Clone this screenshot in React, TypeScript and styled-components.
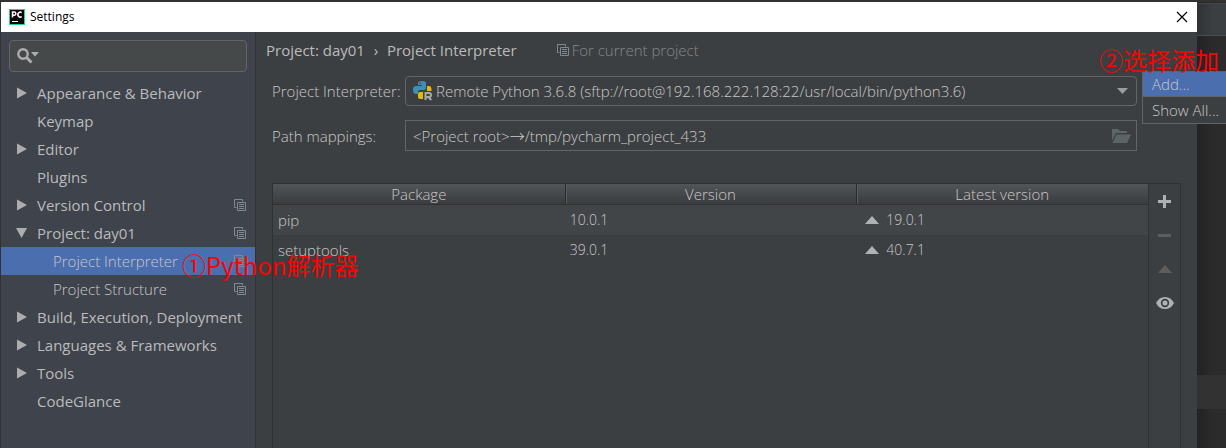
import React from "react";
import styled, { createGlobalStyle, css } from "styled-components";

const Global = createGlobalStyle`
  * { box-sizing: border-box; }
  html, body { margin: 0; background: #2b2b2b; overflow: hidden; }
  body, button, input, select, table {
    font-family: "Open Sans", "Noto Sans", "Noto Sans CJK SC", sans-serif;
    font-size: 15px;
    line-height: 20px;
    color: #bbbbbb;
  }
`;

const lightText = css`
  font-weight: 300;
  color: #c8c8c8;
`;

const Desktop = styled.div`
  position: relative;
  display: flex;
  min-height: 100vh;
  padding: 2px 0 0 1px;
  background: #323232;
`;

const Dialog = styled.section`
  flex: 1;
  min-width: 0;
  display: flex;
  flex-direction: column;
  background: #3c3f41;
`;

const Editor = styled.aside`
  width: 29px;
  display: flex;
  flex-direction: column;
  background: linear-gradient(90deg, #222222, #2b2b2b 16px);
`;

const EditorToolbar = styled.div`
  height: 33px;
  margin-top: 1px;
  background: linear-gradient(90deg, #2f3133, #3c3f41 16px);
  border-top: 1px solid #45484a;
  border-bottom: 1px solid #4b4d4f;
`;

const CaretLine = styled.div`
  height: 34px;
  margin: auto 0 39px;
  background: #323232;
`;

const TitleBar = styled.header`
  display: flex;
  align-items: center;
  gap: 5px;
  height: 30px;
  padding: 0 5px 0 8px;
  background: #ffffff;
  color: #000000;
`;

const Title = styled.h1`
  flex: 1;
  margin: 0;
  font-size: 12px;
  font-weight: 400;
`;

const IconButton = styled.button`
  display: flex;
  align-items: center;
  justify-content: center;
  width: 20px;
  height: 20px;
  padding: 0;
  border: 0;
  background: none;
  color: inherit;
  &:disabled { color: #5e5e5e; }
`;

const Body = styled.div`
  flex: 1;
  display: flex;
`;

const Sidebar = styled.nav`
  width: 255px;
  border-right: 1px solid #323232;
  background: #3e434c;
`;

const SearchBox = styled.label`
  display: flex;
  align-items: center;
  height: 32px;
  margin: 8px 8px 7px;
  padding: 0 7px;
  border: 1px solid #646464;
  border-radius: 4px;
  background: #45494a;
`;

const SearchInput = styled.input`
  flex: 1;
  min-width: 0;
  border: 0;
  outline: 0;
  background: none;
`;

const Tree = styled.ul`
  margin: 0;
  padding: 0;
  list-style: none;
`;

const TreeLink = styled.a<{ $selected?: boolean; $child?: boolean }>`
  display: flex;
  align-items: center;
  height: 28px;
  padding: 0 9px 0 14px;
  color: #bbbbbb;
  text-decoration: none;
  background: ${(p) => (p.$selected ? "#4b6eaf" : "transparent")};
  ${(p) => p.$child && css`padding-left: 30px; ${lightText}`}
`;

const ArrowSlot = styled.span`
  display: flex;
  width: 22px;
`;

const TreeLabel = styled.span`
  flex: 1;
  white-space: nowrap;
`;

const Content = styled.main`
  flex: 1;
  min-width: 0;
  display: flex;
  flex-direction: column;
  padding: 8px 16px 0 10px;
`;

const Crumbs = styled.div`
  display: flex;
  align-items: center;
  height: 20px;
  white-space: nowrap;
`;

const Separator = styled.span`
  width: 22px;
  text-align: center;
`;

const Scope = styled.span`
  display: flex;
  align-items: center;
  gap: 3px;
  margin-left: 40px;
  color: #85888a;
  font-weight: 300;
`;

const Form = styled.form`
  display: grid;
  grid-template-columns: 133px 1fr;
  align-items: center;
  row-gap: 14px;
  padding: 16px 44px 0 6px;
  white-space: nowrap;
  ${lightText}
`;

const Field = styled.div<{ $round?: boolean }>`
  display: flex;
  align-items: center;
  gap: 3px;
  height: ${(p) => (p.$round ? "30px" : "31px")};
  padding: ${(p) => (p.$round ? "0 8px 0 7px" : "0 5px 0 7px")};
  border: 1px solid #646464;
  border-radius: ${(p) => (p.$round ? "4px" : "0")};
`;

const Select = styled.select`
  flex: 1;
  min-width: 0;
  padding: 0;
  border: 0;
  appearance: none;
  background: none;
  ${lightText}
`;

const PathInput = styled.input`
  flex: 1;
  min-width: 0;
  padding: 0;
  border: 0;
  background: none;
  ${lightText}
`;

const PackagePanel = styled.div`
  flex: 1;
  display: flex;
  margin: 32px 0 0 6px;
  border: 1px solid #2f3133;
  border-bottom: 0;
`;

const PackageArea = styled.div`
  flex: 1;
  border-right: 1px solid #323232;
`;

const Table = styled.table`
  width: 100%;
  table-layout: fixed;
  border-collapse: separate;
  border-spacing: 0;
  ${lightText}
`;

const HeadCell = styled.th`
  height: 21px;
  padding: 0;
  border-bottom: 1px solid #2f3133;
  background: linear-gradient(#515558, #3a3c3e);
  font-weight: 300;
  & + & { box-shadow: inset 1px 0 #2b2b2b, inset 2px 0 #5a5d5f; }
`;

const Row = styled.tr`
  &:nth-child(odd) { background: #414547; }
`;

const Cell = styled.td<{ $numeric?: boolean }>`
  height: 30px;
  padding: 0 5px;
  font-size: ${(p) => (p.$numeric ? "14px" : "15px")};
`;

const Latest = styled.span`
  display: flex;
  align-items: center;
  gap: 7px;
  padding-left: 4px;
  svg { color: #afb1b3; }
`;

const Actions = styled.div`
  display: flex;
  flex-direction: column;
  align-items: center;
  gap: 14px;
  width: 31px;
  padding-top: 7px;
  color: #afb1b3;
`;

const Menu = styled.div`
  position: absolute;
  top: 71px;
  right: 0;
  width: 84px;
  border: 1px solid #616365;
  border-right: 0;
  background: #3c3f41;
`;

const MenuItem = styled.button<{ $active?: boolean }>`
  display: block;
  width: 100%;
  height: 24px;
  padding: 0 0 0 9px;
  border: 0;
  background: ${(p) => (p.$active ? "#4b6eaf" : "transparent")};
  text-align: left;
  white-space: nowrap;
  ${lightText}
  & + & { height: 27px; border-top: 1px solid #616365; }
`;

const Note = styled.span<{ $x: string; $y: string }>`
  position: absolute;
  left: ${(p) => p.$x};
  top: ${(p) => p.$y};
  color: #ff0000;
  font: 400 24px/32px "Noto Sans CJK SC", sans-serif;
  white-space: nowrap;
  pointer-events: none;
`;

const CopyIcon = () => (
  <svg width="12" height="12" viewBox="0 0 12 12" fill="none" stroke="#7f8b91" aria-hidden="true">
    <path d="M2.5 8.5h-2v-8h8v2M3.5 3.5h8v8h-8zM5 5.5h5M5 7.5h5M5 9.5h5" />
  </svg>
);

const TreeArrow = ({ open }: { open?: boolean }) => (
  <svg width="12" height="12" viewBox="0 0 12 12" fill="#adadad" aria-hidden="true">
    <path d={open ? "M1 1h11L6.500 11z" : "M2 0.500v11L12 6z"} />
  </svg>
);

const UpTriangle = () => (
  <svg width="14" height="8" viewBox="0 0 14 8" fill="currentColor" aria-hidden="true">
    <path d="M0 8L7 0l7 8z" />
  </svg>
);

const PyCharmLogo = () => (
  <svg width="16" height="16" viewBox="0 0 16 16" aria-hidden="true">
    <path fill="#21d789" d="M0 0h16v16H0z" />
    <path fill="#080808" d="M1 1h14v14H1z" />
    <path fill="none" stroke="#fff" strokeWidth="1.500" d="M3.500 8.500V3h1.700a1.600 1.600 0 0 1 0 3.200H3.500M12.700 3.700a2.400 2.400 0 1 0 0 3.900" />
    <path fill="#fff" d="M3 12h6v1H3z" />
  </svg>
);

const PythonIcon = () => (
  <svg width="20" height="20" viewBox="0 0 20 20" aria-hidden="true">
    <path fill="#3d8fb8" d="M5 2q0-2 4-2t4 2v5q0 2-2 2H7q-2 0-2 2v2H3q-3 0-3-4t3-4h6V4H5z" />
    <path fill="#e5b712" d="M14 5h2q2.500 0 2.500 4v1H12q-2 0-2 2v6H8q-3 0-3-2v-3q0-2 2-2h4q3 0 3-2z" />
    <circle cx="7" cy="2.300" r="0.800" fill="#3c3f41" />
    <path fill="#3c3f41" d="M10.500 10H20v10h-9.500z" />
    <path fill="none" stroke="#a4abb0" strokeWidth="2" d="M12.500 19v-7H16a1.900 1.900 0 0 1 0 4h-3.500M15.500 16l2.700 3" />
  </svg>
);

const tree = [
  { label: "Appearance & Behavior", arrow: true },
  { label: "Keymap" },
  { label: "Editor", arrow: true },
  { label: "Plugins" },
  { label: "Version Control", arrow: true, copy: true },
  { label: "Project: day01", arrow: true, open: true, copy: true },
  { label: "Project Interpreter", child: true, selected: true, copy: true },
  { label: "Project Structure", child: true, copy: true },
  { label: "Build, Execution, Deployment", arrow: true },
  { label: "Languages & Frameworks", arrow: true },
  { label: "Tools", arrow: true },
  { label: "CodeGlance" },
];

const packages = [
  { name: "pip", version: "10.0.1", latest: "19.0.1" },
  { name: "setuptools", version: "39.0.1", latest: "40.7.1" },
];

export default function App() {
  return (
    <Desktop>
      <Global />
      <Dialog>
        <TitleBar>
          <PyCharmLogo />
          <Title>Settings</Title>
          <IconButton aria-label="Close">
            <svg width="12" height="12" viewBox="0 0 12 12" stroke="#000" strokeWidth="1.200">
              <path d="M1 1l10 10M11 1L1 11" />
            </svg>
          </IconButton>
        </TitleBar>
        <Body>
          <Sidebar aria-label="Settings sections">
            <SearchBox>
              <svg width="24" height="18" viewBox="0 0 24 18" aria-hidden="true">
                <circle cx="6" cy="7" r="4.700" fill="none" stroke="#adadad" strokeWidth="2.400" />
                <path d="M9.500 10.500l5 5" stroke="#adadad" strokeWidth="3" />
                <path d="M14 5h8l-4 4.500z" fill="#adadad" />
              </svg>
              <SearchInput type="text" aria-label="Search settings" />
            </SearchBox>
            <Tree>
              {tree.map((n) => (
                <li key={n.label}>
                  <TreeLink href="#" $selected={n.selected} $child={n.child}>
                    <ArrowSlot>{n.arrow && <TreeArrow open={n.open} />}</ArrowSlot>
                    <TreeLabel>{n.label}</TreeLabel>
                    {n.copy && <CopyIcon />}
                  </TreeLink>
                </li>
              ))}
            </Tree>
          </Sidebar>
          <Content>
            <Crumbs>
              <span>Project: day01</span>
              <Separator>›</Separator>
              <span>Project Interpreter</span>
              <Scope><CopyIcon />For current project</Scope>
            </Crumbs>
            <Form>
              <label htmlFor="interpreter">Project Interpreter:</label>
              <Field $round>
                <PythonIcon />
                <Select id="interpreter">
                  <option>Remote Python 3.6.8 (sftp://root@192.168.222.128:22/usr/local/bin/python3.6)</option>
                </Select>
                <svg width="11" height="6" viewBox="0 0 11 6" fill="#9a9da0" aria-hidden="true">
                  <path d="M0 0h11L5.500 6z" />
                </svg>
              </Field>
              <label htmlFor="mappings">Path mappings:</label>
              <Field>
                <PathInput id="mappings" defaultValue="<Project root>→/tmp/pycharm_project_433" />
                <IconButton type="button" aria-label="Browse">
                  <svg width="20" height="14" viewBox="0 0 20 14" fill="#5d6467">
                    <path d="M1 12V0h6l2 2h7v2H5z" />
                    <path d="M5.500 5.500H20L16 14H1.500z" />
                  </svg>
                </IconButton>
              </Field>
            </Form>
            <PackagePanel>
              <PackageArea>
                <Table>
                  <thead>
                    <tr>
                      <HeadCell>Package</HeadCell>
                      <HeadCell>Version</HeadCell>
                      <HeadCell>Latest version</HeadCell>
                    </tr>
                  </thead>
                  <tbody>
                    {packages.map((p) => (
                      <Row key={p.name}>
                        <Cell>{p.name}</Cell>
                        <Cell $numeric>{p.version}</Cell>
                        <Cell $numeric><Latest><UpTriangle />{p.latest}</Latest></Cell>
                      </Row>
                    ))}
                  </tbody>
                </Table>
              </PackageArea>
              <Actions>
                <IconButton aria-label="Install">
                  <svg width="13" height="13" viewBox="0 0 13 13" fill="currentColor"><path d="M5 0h3v5h5v3H8v5H5V8H0V5h5z" /></svg>
                </IconButton>
                <IconButton aria-label="Uninstall" disabled>
                  <svg width="13" height="3" viewBox="0 0 13 3" fill="currentColor"><path d="M0 0h13v3H0z" /></svg>
                </IconButton>
                <IconButton aria-label="Upgrade" disabled><UpTriangle /></IconButton>
                <IconButton aria-label="Show early releases">
                  <svg width="18" height="12" viewBox="0 0 18 12">
                    <path fill="currentColor" fillRule="evenodd" d="M0 6q3-6 9-6t9 6q-3 6-9 6T0 6zM9 1.800a4.200 4.200 0 1 0 0 8.400a4.200 4.200 0 0 0 0-8.400z" />
                    <circle cx="9" cy="6" r="2.500" fill="currentColor" />
                  </svg>
                </IconButton>
              </Actions>
            </PackagePanel>
          </Content>
        </Body>
      </Dialog>
      <Editor>
        <EditorToolbar />
        <CaretLine />
      </Editor>
      <Menu>
        <MenuItem $active>Add...</MenuItem>
        <MenuItem>Show All...</MenuItem>
      </Menu>
      <Note $x="182px" $y="249px">①Python解析器</Note>
      <Note $x="1099px" $y="44px">②选择添加</Note>
    </Desktop>
  );
}
